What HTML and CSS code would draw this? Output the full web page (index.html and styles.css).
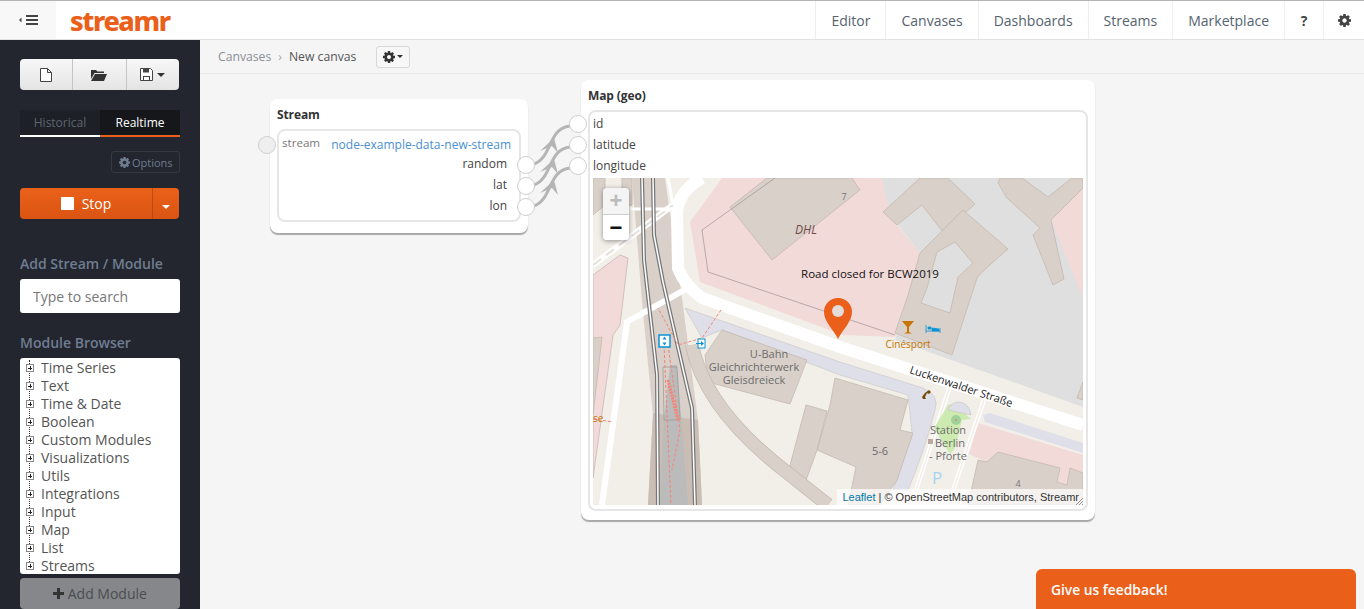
FILE: index.html
```html
<!DOCTYPE html>
<html lang="en">
<head>
  <meta charset="UTF-8" />
  <title>Streamr</title>
  <link rel="stylesheet" href="styles.css">
</head>
<body>
  <svg class="defs" width="0" height="0">
    <symbol id="cog" viewBox="0 -128 1536 1536"><path fill-rule="evenodd" d="M1024 640q0-106-75-181t-181-75-181 75-75 181 75 181 181 75 181-75 75-181zm512-109v222q0 12-8 23t-20 13l-185 28q-19 54-39 91 35 50 107 138 10 12 10 25t-9 23q-27 37-99 108t-94 71q-12 0-26-9l-138-108q-44 23-91 38-16 136-29 186-7 28-36 28h-222q-14 0-24.5-8.5t-11.5-21.5l-28-184q-49-16-90-37l-141 107q-10 9-25 9-14 0-25-11-126-114-165-168-7-10-7-23 0-12 8-23 15-21 51-66.5t54-70.5q-27-50-41-99l-183-27q-13-2-21-12.5t-8-23.5v-222q0-12 8-23t19-13l186-28q14-46 39-92-40-57-107-138-10-12-10-24 0-10 9-23 26-36 98.5-107.5t94.5-71.5q13 0 26 10l138 107q44-23 91-38 16-136 29-186 7-28 36-28h222q14 0 24.5 8.5t11.5 21.5l28 184q49 16 90 37l142-107q9-9 24-9 13 0 25 10 129 119 165 170 7 8 7 22 0 12-8 23-15 21-51 66.5t-54 70.5q26 50 41 98l183 28q13 2 21 12.5t8 23.5z"/></symbol>
  </svg>

  <header class="topbar">
    <button class="menu-toggle">
      <svg width="19" height="10" viewBox="0 0 19 10"><path d="M0 5l2.500-2.500v5zM7 0h12v2H7zM7 4h12v2H7zM7 8h12v2H7z" fill="#444"/></svg>
    </button>
    <div class="logo">streamr</div>
    <nav class="main-nav">
      <a>Editor</a>
      <a>Canvases</a>
      <a>Dashboards</a>
      <a>Streams</a>
      <a>Marketplace</a>
      <a class="nav-icon"><b>?</b></a>
      <a class="nav-icon nav-cog"><svg width="13" height="13"><use href="#cog"/></svg></a>
    </nav>
  </header>

  <div class="layout">
    <aside class="sidebar">
      <div class="btn-group file-btns">
        <button>
          <svg width="12" height="14" viewBox="0 0 12 14"><path d="M.5.5h7l4 4v9H.5zM7.500.5v4h4" fill="#fff" stroke="#444"/></svg>
        </button>
        <button>
          <svg width="16" height="12" viewBox="0 0 16 12"><path d="M0 1h5l1.500 1.500H13V4H3.500L0 10zM4 5h12l-3 7H0z" fill="#333"/></svg>
        </button>
        <button>
          <svg width="13" height="13" viewBox="0 0 13 13"><path d="M.5.5h10l2 2v10H.5z" fill="#fff" stroke="#444"/><path d="M3 1h6v3.500H3zM3 8h7v1H3zM3 8h1v4H3zM9 8h1v4H9z" fill="#444"/></svg>
          <span class="caret"></span>
        </button>
      </div>

      <div class="mode-tabs">
        <a class="tab tab-historical">Historical</a>
        <a class="tab tab-realtime">Realtime</a>
      </div>

      <div class="options-row">
        <button class="options-btn"><svg width="11" height="11"><use href="#cog"/></svg> Options</button>
      </div>

      <div class="run-group">
        <button class="stop-btn"><span class="stop-square"></span>Stop</button>
        <button class="stop-caret"><span class="caret caret-white"></span></button>
      </div>

      <h4 class="side-title title-add">Add Stream / Module</h4>
      <input class="search" type="text" placeholder="Type to search" />

      <h4 class="side-title title-browser">Module Browser</h4>
      <ul class="tree">
        <li><i class="tree-plus"></i>Time Series</li>
        <li><i class="tree-plus"></i>Text</li>
        <li><i class="tree-plus"></i>Time &amp; Date</li>
        <li><i class="tree-plus"></i>Boolean</li>
        <li><i class="tree-plus"></i>Custom Modules</li>
        <li><i class="tree-plus"></i>Visualizations</li>
        <li><i class="tree-plus"></i>Utils</li>
        <li><i class="tree-plus"></i>Integrations</li>
        <li><i class="tree-plus"></i>Input</li>
        <li><i class="tree-plus"></i>Map</li>
        <li><i class="tree-plus"></i>List</li>
        <li><i class="tree-plus"></i>Streams</li>
      </ul>
      <button class="add-module"><svg width="11" height="11" viewBox="0 0 11 11"><path d="M4 0h3v4h4v3H7v4H4V7H0V4h4z" fill="#333"/></svg> Add Module</button>
    </aside>

    <main class="workspace">
      <div class="crumbs">
        <span class="crumb-link">Canvases</span>
        <span class="crumb-sep">›</span>
        <span class="crumb-current">New canvas</span>
        <button class="crumb-cog"><svg width="12" height="12"><use href="#cog"/></svg><span class="caret"></span></button>
      </div>

      <div class="canvas">
        <!-- stream module -->
        <section class="module module-stream">
          <h5 class="module-title">Stream</h5>
          <div class="module-body">
            <div class="param-row"><span class="param-name">stream</span><a class="param-value">node-example-data-new-stream</a></div>
            <div class="out-row">random</div>
            <div class="out-row">lat</div>
            <div class="out-row">lon</div>
          </div>
          <i class="port port-param"></i>
          <i class="port port-o1"></i>
          <i class="port port-o2"></i>
          <i class="port port-o3"></i>
        </section>

        <!-- map module -->
        <section class="module module-map">
          <h5 class="module-title">Map (geo)</h5>
          <div class="module-body">
            <div class="in-row">id</div>
            <div class="in-row">latitude</div>
            <div class="in-row">longitude</div>
            <div class="map">
              <svg class="map-art" width="490" height="327" viewBox="593 178 490 327">
                <rect x="593" y="178" width="490" height="327" fill="#f2efe9"/>
                <!-- landuse -->
                <polygon points="722,178 882,178 897,225 920,253 895,337 843,335 700,282 690,222" fill="#f2dad9"/>
                <polygon points="882,178 1083,178 1083,407 895,340 920,253 890,215" fill="#dfdfdf"/>
                <polygon points="1083,188 1051,220 1083,298" fill="#f2dad9"/>
                <polygon points="593,275 620,255 628,258 620,325 613,335 593,478" fill="#f2dad9" stroke="#c4b0ac" stroke-width=".7"/>
                <polygon points="978,423 1083,455 1083,473 1070,468 1067,485 1057,482 1060,468 998,452 987,462 969,454" fill="#f2dad9"/>
                <!-- parking -->
                <path d="M685,308L840,362L923,388Q940,395 935,410Q925,450 908,490L893,490L897,480L912,433L908,395L840,375L722,330L702,338Z" fill="#dfdfe9" stroke="#c9c5c5" stroke-width=".6"/>
                <polygon points="983,415 990,413 1083,443 1083,453 985,422" fill="#dfdfe9"/>
                <!-- buildings -->
                <g fill="#d9d0c9" stroke="#c4b9af" stroke-width=".8">
                  <polygon points="730,207 767,178 852,178 860,190 772,260"/>
                  <polygon points="883,212 920,178 948,178 975,204 943,232 922,205 897,225"/>
                  <polygon points="920,253 963,210 1008,249 982,272 977,278 952,355 895,333 908,295"/>
                  <polygon points="1000,178 998,183 1007,198 1040,228 1033,235 1053,285 1064,279 1051,220 1083,188 1083,178 1072,178 1048,197 1022,178"/>
                  <polygon points="1077,398 1083,382 1083,400"/>
                  <polygon points="593,215 605,205 605,178 593,178"/>
                  <polygon points="622,178 632,178 632,205 622,207"/>
                  <polygon points="593,338 602,337 593,415"/>
                  <polygon points="722,330 807,360 790,404 708,382 705,355"/>
                  <polygon points="830,405 835,378 908,400 900,430 913,433 897,480 880,505 848,505 856,467 817,450"/>
                  <polygon points="806,405 827,411 817,450 805,483 788,473"/>
                  <polygon points="978,460 987,462 998,452 1060,468 1057,482 1067,485 1070,468 1083,473 1083,505 968,505"/>
                </g>
                <polygon points="955,242 973,263 958,277 950,313 921,303 927,288 937,252" fill="#dfdfdf" stroke="#c4b9af" stroke-width=".8"/>
                <polyline points="775,178 702,230 708,272 895,335" fill="none" stroke="#a89c9c" stroke-width=".8"/>
                <!-- rail strip -->
                <polygon points="632,178 665,178 682,298 698,420 702,505 648,505 653,415 642,302" fill="#d9d0c9"/>
                <polygon points="653,413 698,420 702,505 648,505" fill="#c9bdb4"/>
                <polygon points="670,365 677,365 688,505 660,505 664,418" fill="#bbbbbb"/>
                <polygon points="663,367 677,367 680,420 664,420" fill="none" stroke="#999" stroke-width=".7"/>
                <path d="M692,345Q705,410 789,474L828,505" fill="none" stroke="#c4b9af" stroke-width="14"/>
                <path d="M692,345Q705,410 789,474L828,505" fill="none" stroke="#d9d0c9" stroke-width="12.5"/>
                <!-- roads -->
                <path d="M702,178Q677,192 677,215L678,268Q684,285 702,298L840,347L1083,425" fill="none" stroke="#fff" stroke-width="12"/>
                <path d="M688,288L627,322L602,505" fill="none" stroke="#fff" stroke-width="6"/>
                <path d="M593,265L673,205" fill="none" stroke="#fff" stroke-width="6"/>
                <path d="M593,265L673,205" fill="none" stroke="#e4e0da" stroke-width="2" stroke-dasharray="10 6"/>
                <path d="M630,209L680,209M668,178L673,205" fill="none" stroke="#fff" stroke-width="3"/>
                <path d="M948,387L913,495M951,388L916,495M983,398L950,495M986,399L953,495" fill="none" stroke="#fff" stroke-width="1.5"/>
                <!-- rails -->
                <g fill="none">
                  <path d="M642,178L644,260L657,375L658,505" stroke="#777" stroke-width="4"/>
                  <path d="M642,178L644,260L657,375L658,505" stroke="#fff" stroke-width="1.5"/>
                  <path d="M653,178L654,235L663,282L692,408L695,505" stroke="#777" stroke-width="4"/>
                  <path d="M653,178L654,235L663,282L692,408L695,505" stroke="#fff" stroke-width="1.5"/>
                </g>
                <!-- garden -->
                <path d="M948,405Q953,403 958,407L971,419L962,420L955,448L950,454L934,428Z" fill="#cdebb0"/>
                <path d="M948,410Q950,403 958,402Q969,402 971,415Z" fill="#dfdfe9" stroke="#c4b9af" stroke-width=".5"/>
                <circle cx="956" cy="420" r="5" fill="#9ed29a"/>
                <circle cx="956" cy="420" r="1" fill="#e58a6e"/>
                <!-- paths -->
                <path d="M721,310L702,338L678,345L658,308M664,345L671,505M668,345L680,430L672,470M593,419L613,422" fill="none" stroke="#fa8072" stroke-width="1" stroke-dasharray="3 2"/>
                <path d="M668,380L678,420" fill="none" stroke="#fa8072" stroke-width="3" stroke-dasharray="2 1"/>
                <!-- poi -->
                <rect x="659" y="335" width="11" height="12" fill="#fff" stroke="#0a94d6" stroke-width="1.5"/>
                <path d="M664.500,336.500l2,3h-4zM664.500,345.500l2,-3h-4z" fill="#0a94d6"/>
                <rect x="698" y="339" width="7" height="9" fill="#fff" stroke="#0a94d6"/>
                <path d="M696,343h5v-2l3,2.500-3,2.500v-2h-5z" fill="#0a94d6"/>
                <path d="M902,321h12l-5,6v5l3,1.500h-8l3-1.500v-5z" fill="#c77400"/>
                <path d="M926,325v8M926,331h14M940,328v5M928,327h3v2h-3zM932,328l7,1v2h-7z" stroke="#0a94d6" fill="#0a94d6" stroke-width=".8"/>
                <path d="M923,399l-1-2q3-5 7-7l2,2-2,2-2-1q-1,2-2,4l1,2z" fill="#734a08"/>
                <rect x="928" y="439" width="5" height="5" fill="#bca9a0"/>
                <!-- labels -->
                <text class="map-label map-dhl" x="795" y="234">DHL</text>
                <text class="map-label map-small" x="844" y="200" fill="#777">7</text>
                <text class="map-label map-gray" x="769" y="358">U-Bahn</text>
                <text class="map-label map-gray" x="754" y="371">Gleichrichterwerk</text>
                <text class="map-label map-gray" x="754" y="384">Gleisdreieck</text>
                <text class="map-label map-orange" x="908" y="348">Cinésport</text>
                <text class="map-label map-orange-left" x="593" y="422">se</text>
                <text class="map-label map-gray" x="880" y="455">5-6</text>
                <text class="map-label map-gray" x="948" y="434">Station</text>
                <text class="map-label map-gray" x="950" y="447">Berlin</text>
                <text class="map-label map-gray" x="948" y="460">- Pforte</text>
                <text class="map-label map-small" x="1018" y="487" fill="#777">4</text>
                <text class="map-p" x="937" y="484">P</text>
                <text class="map-road" transform="translate(960,390) rotate(18.5)">Luckenwalder Straße</text>
                <text class="map-popup" x="870" y="278">Road closed for BCW2019</text>
                <!-- marker -->
                <path d="M838,339C834,330 824,322 824,312A14,14 0 1 1 852,312C852,322 842,330 838,339Z" fill="#ea5f1a"/>
                <circle cx="838" cy="311" r="6" fill="#e4dcd8"/>
              </svg>
              <div class="zoom-ctl">
                <span class="zoom-in">+</span>
                <span class="zoom-out">−</span>
              </div>
              <div class="attribution"><a>Leaflet</a> | © OpenStreetMap contributors, Streamr</div>
              <svg class="resize-grip" width="8" height="8" viewBox="0 0 8 8"><path d="M8 1L1 8M8 4L4 8M8 7L7 8" stroke="#999" stroke-width="1"/></svg>
            </div>
          </div>
          <i class="port port-i1"></i>
          <i class="port port-i2"></i>
          <i class="port port-i3"></i>
        </section>

        <!-- connections between ports -->
        <svg class="wires" width="70" height="110" viewBox="520 110 70 110">
          <g fill="none" stroke="#b5b5b5" stroke-width="3">
            <path d="M534,164C552,158 548,128 570,126"/>
            <path d="M534,185C552,179 548,149 570,147"/>
            <path d="M534,206C552,200 548,170 570,168"/>
          </g>
          <g fill="#b5b5b5">
            <path d="M554,138L540,151L552,146L558,153Z"/>
            <path d="M554,159L540,172L552,167L558,174Z"/>
            <path d="M554,180L540,193L552,188L558,195Z"/>
          </g>
        </svg>
      </div>
    </main>
  </div>

  <a class="feedback">Give us feedback!</a>
</body>
</html>
```

FILE: styles.css
```css
html, body {
  margin: 0;
  padding: 0;
  height: 609px;
  overflow: hidden;
}
body {
  font-family: "Open Sans", sans-serif;
  font-size: 14px;
  color: #333;
  background-color: #f5f5f5;
  position: relative;
}
button {
  font-family: inherit;
  cursor: pointer;
}
.defs {
  position: absolute;
}

/* top bar */
.topbar {
  display: flex;
  align-items: stretch;
  height: 38px;
  background-color: white;
  border-top: 1px solid #b4b4b4;
  border-bottom: 1px solid #e2e2e2;
}
.menu-toggle {
  width: 56px;
  background-color: #f8f8f8;
  border: none;
  padding: 0;
}
.logo {
  margin-left: 14px;
  font-family: "Noto Sans", sans-serif;
  font-weight: 800;
  font-size: 27px;
  line-height: 40px;
  letter-spacing: -1.4px;
  color: #ea5f1a;
}
.main-nav {
  display: flex;
  margin-left: auto;
}
.main-nav a {
  display: flex;
  align-items: center;
  padding: 0 15px;
  border-left: 1px solid #eeeeee;
  color: #55636f;
  font-size: 14px;
}
.main-nav .nav-icon {
  color: #444;
  width: 38px;
  padding: 0;
  justify-content: center;
}
.main-nav .nav-cog {
  width: 40px;
}
.nav-cog svg {
  fill: #444;
}

/* sidebar */
.layout {
  display: flex;
  height: 569px;
}
.sidebar {
  width: 200px;
  flex: none;
  background-color: #23262e;
  padding: 19px 20px 0;
  box-sizing: border-box;
}
.btn-group {
  display: flex;
  width: 159px;
  height: 31px;
}
.btn-group button {
  flex: 1;
  display: flex;
  align-items: center;
  justify-content: center;
  gap: 4px;
  padding: 0;
  background: linear-gradient(#f7f7f7, #e4e4e4);
  border: none;
  border-left: 1px solid #c4c4c4;
}
.btn-group button:first-child {
  border-left: none;
  border-radius: 4px 0 0 4px;
}
.btn-group button:last-child {
  border-radius: 0 4px 4px 0;
}
.caret {
  display: inline-block;
  border-top: 4px solid #333;
  border-left: 4px solid transparent;
  border-right: 4px solid transparent;
}
.caret-white {
  border-top-color: white;
}
.mode-tabs {
  display: flex;
  margin-top: 20px;
  width: 160px;
}
.tab {
  width: 80px;
  height: 25px;
  line-height: 25px;
  text-align: center;
  font-size: 12px;
}
.tab-historical {
  background-color: #1d2026;
  color: #5f6670;
  border-bottom: 2px solid white;
}
.tab-realtime {
  background-color: #15171b;
  color: white;
  border-bottom: 2px solid #ea5f1a;
}
.options-row {
  display: flex;
  justify-content: flex-end;
  margin-top: 14px;
}
.options-btn {
  display: flex;
  align-items: center;
  gap: 2px;
  width: 69px;
  height: 22px;
  padding: 0 0 0 7px;
  background: transparent;
  border: 1px solid #343a45;
  border-radius: 3px;
  color: #6f7d92;
  font-size: 11px;
}
.options-btn svg {
  fill: #6f7d92;
}
.run-group {
  display: flex;
  width: 159px;
  height: 31px;
  margin-top: 15px;
}
.stop-btn, .stop-caret {
  background: linear-gradient(#ea6119, #da5412);
  border: none;
  color: white;
  height: 31px;
  padding: 0;
}
.stop-btn {
  flex: 1;
  display: flex;
  align-items: center;
  justify-content: center;
  gap: 8px;
  border-radius: 4px 0 0 4px;
  font-size: 14px;
}
.stop-square {
  width: 13px;
  height: 13px;
  background-color: white;
}
.stop-caret {
  width: 27px;
  border-left: 1px solid #bb4a10;
  border-radius: 0 4px 4px 0;
}
.side-title {
  margin: 0;
  font-size: 14px;
  font-weight: 600;
  line-height: 20px;
  color: #6f7d92;
}
.title-add {
  margin-top: 35px;
}
.search {
  display: block;
  width: 160px;
  height: 34px;
  margin-top: 5px;
  padding: 0 13px;
  box-sizing: border-box;
  border: none;
  border-radius: 3px;
  font-family: inherit;
  font-size: 14px;
}
.search::placeholder {
  color: #777;
  opacity: 1;
}
.title-browser {
  margin-top: 20px;
}
.tree {
  list-style: none;
  margin: 5px 0 0;
  padding: 1px 0 0 21px;
  width: 160px;
  height: 216px;
  box-sizing: border-box;
  background-color: white;
  border-radius: 3px;
  color: #555;
  overflow: hidden;
  position: relative;
}
.tree li {
  height: 18px;
  line-height: 18px;
  position: relative;
}
.tree::before {
  content: "";
  position: absolute;
  left: 9px;
  top: 2px;
  bottom: 8px;
  border-left: 1px dotted #333;
}
.tree-plus {
  position: absolute;
  left: -15px;
  top: 5px;
  width: 6px;
  height: 6px;
  background:
    linear-gradient(#222, #222) center / 4px 1px no-repeat,
    linear-gradient(#222, #222) center / 1px 4px no-repeat,
    white;
  border: 1px solid #888;
}
.add-module {
  display: block;
  width: 160px;
  height: 31px;
  margin-top: 4px;
  background-color: #85878b;
  border: none;
  border-radius: 4px;
  color: #4b4d51;
  font-size: 14px;
  padding: 0;
}

/* main area */
.workspace {
  flex: 1;
  display: flex;
  flex-direction: column;
}
.crumbs {
  display: flex;
  align-items: center;
  height: 33px;
  padding-left: 18px;
  border-bottom: 1px solid #e8e8e8;
  font-size: 12.2px;
  flex: none;
}
.crumb-link {
  color: #8a8f96;
}
.crumb-sep {
  margin: 0 7px;
  color: #aaa;
}
.crumb-current {
  color: #555;
}
.crumb-cog {
  display: flex;
  align-items: center;
  justify-content: center;
  gap: 2px;
  width: 34px;
  height: 22px;
  margin-left: 20px;
  padding: 0;
  background-color: #f7f7f7;
  border: 1px solid #d8d8d8;
  border-radius: 3px;
}
.crumb-cog svg {
  fill: #333;
}
.crumb-cog .caret {
  border-top-width: 3px;
  border-left-width: 3px;
  border-right-width: 3px;
}

/* free canvas: modules sit at their own coordinates */
.canvas {
  position: relative;
  flex: 1;
}
.module {
  position: absolute;
  box-sizing: border-box;
  background-color: white;
  border-radius: 8px;
  box-shadow: 0 2px 1px #a8a8a8;
  padding: 0 7px 7px;
}
.module-stream {
  left: 70px;
  top: 25px;
  width: 258px;
  height: 134px;
}
.module-map {
  left: 381px;
  top: 6px;
  width: 514px;
  height: 440px;
}
.module-title {
  margin: 0;
  height: 30px;
  line-height: 32px;
  font-size: 12px;
  font-weight: 700;
  color: #333;
  letter-spacing: -.1px;
}
.module-body {
  box-sizing: border-box;
  border: 2px solid #e6e6e6;
  border-radius: 8px;
  background-color: white;
}
.module-stream .module-body {
  height: 93px;
}
.module-map .module-body {
  height: 401px;
}
.param-row {
  display: flex;
  justify-content: space-between;
  padding: 4px 8px 0 3px;
  height: 23px;
  box-sizing: border-box;
}
.param-name {
  font-size: 11.6px;
  color: #777;
}
.param-value {
  font-size: 12px;
  color: #4a8fd0;
  padding-top: 1px;
}
.out-row {
  height: 21px;
  line-height: 20px;
  text-align: right;
  padding-right: 12px;
  font-size: 12px;
  color: #444;
}
.in-row {
  height: 21px;
  line-height: 24px;
  padding-left: 3px;
  font-size: 12px;
  color: #444;
}
.port {
  position: absolute;
  width: 18px;
  height: 18px;
  box-sizing: border-box;
  background-color: white;
  border: 1px solid #cfcfcf;
  border-radius: 50%;
  z-index: 2;
}
.port-param { left: -12px; top: 37px; background-color: #efefef; }
.port-o1 { left: 247px; top: 57px; }
.port-o2 { left: 247px; top: 78px; }
.port-o3 { left: 247px; top: 99px; }
.port-i1 { left: -12px; top: 35px; }
.port-i2 { left: -12px; top: 56px; }
.port-i3 { left: -12px; top: 77px; }
.wires {
  position: absolute;
  left: 320px;
  top: 36px;
  z-index: 1;
}

/* map */
.map {
  position: relative;
  width: 490px;
  height: 327px;
  margin-left: 3px;
  margin-top: 3px;
  overflow: hidden;
}
.map-art {
  display: block;
}
.map-label {
  font-family: "Open Sans", sans-serif;
  font-size: 11px;
}
.map-small {
  font-size: 9px;
  text-anchor: middle;
}
.map-dhl {
  font-size: 12px;
  font-style: italic;
  fill: #734a4a;
}
.map-gray {
  fill: #6b6b6b;
  text-anchor: middle;
}
.map-orange {
  font-size: 10px;
  fill: #c77400;
  text-anchor: middle;
}
.map-orange-left {
  font-size: 10px;
  fill: #c77400;
}
.map-p {
  font-family: "Open Sans", sans-serif;
  font-size: 17px;
  fill: #a6d5f0;
  text-anchor: middle;
}
.map-road {
  font-family: "Open Sans", sans-serif;
  font-size: 11px;
  fill: #222;
  text-anchor: middle;
}
.map-popup {
  font-family: "Open Sans", sans-serif;
  font-size: 11.5px;
  fill: #111;
  text-anchor: middle;
}
.zoom-ctl {
  position: absolute;
  left: 10px;
  top: 10px;
  width: 26px;
  height: 52px;
  border-radius: 4px;
  box-shadow: 0 1px 5px rgba(0,0,0,0.4);
  overflow: hidden;
  display: flex;
  flex-direction: column;
}
.zoom-ctl span {
  height: 26px;
  line-height: 26px;
  text-align: center;
  font-family: "Liberation Sans", sans-serif;
  font-size: 22px;
  font-weight: 700;
}
.zoom-in {
  background-color: #f4f4f4;
  color: #bbb;
  border-bottom: 1px solid #ccc;
}
.zoom-out {
  background-color: white;
  color: #111;
}
.attribution {
  position: absolute;
  right: 0;
  bottom: 0;
  height: 16px;
  line-height: 16px;
  padding: 0 4px 0 5px;
  background-color: rgba(255,255,255,0.7);
  font-family: "Liberation Sans", sans-serif;
  font-size: 11px;
  color: #333;
  white-space: nowrap;
}
.attribution a {
  color: #0078a8;
}
.resize-grip {
  position: absolute;
  right: 0;
  bottom: 0;
}

/* feedback tab */
.feedback {
  position: absolute;
  left: 1036px;
  top: 569px;
  width: 320px;
  height: 40px;
  line-height: 41px;
  padding-left: 15px;
  box-sizing: border-box;
  background-color: #ea5f1a;
  border-radius: 6px 6px 0 0;
  color: white;
  font-size: 13.8px;
  font-weight: 600;
}
```
